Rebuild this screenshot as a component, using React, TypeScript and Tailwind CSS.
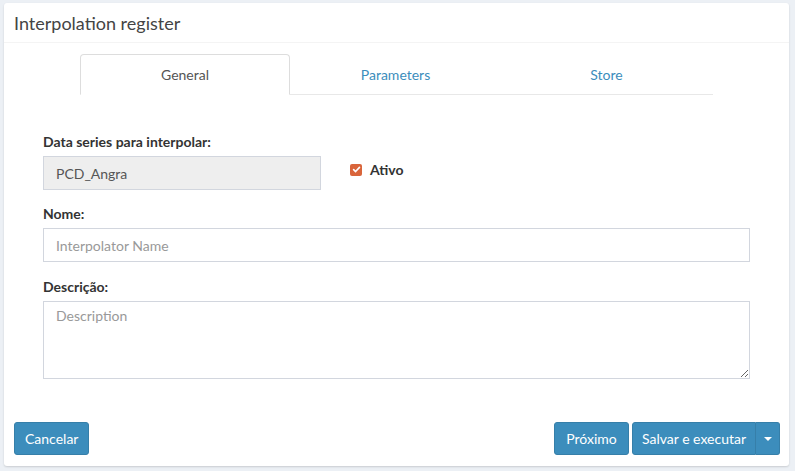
import React from "react";

const font = { fontFamily: "Lato, 'Open Sans', sans-serif" };

export default function App() {
  return (
    <div className="min-h-screen bg-[#ecf0f5] pt-[3px] pl-[4px]" style={font}>
      <div className="w-[785px] h-[463px] bg-white rounded-[3px] shadow-[0_1px_2px_rgba(0,0,0,0.15)] flex flex-col">
        <div className="h-[40px] border-b border-[#f4f4f4] pl-[10px] flex items-center">
          <h3 className="text-[18px] text-[#444] leading-none">Interpolation register</h3>
        </div>

        <div className="mt-[11px] ml-[76px] w-[633px] flex border-b border-[#e8e8e8] text-[14px]">
          <div className="w-[210px] h-[41px] -mb-px flex items-center justify-center border border-[#ddd] border-b-white bg-white rounded-t-[4px] text-[#555]">
            General
          </div>
          <div className="w-[211px] h-[40px] flex items-center justify-center text-[#3c8dbc]">Parameters</div>
          <div className="w-[211px] h-[40px] flex items-center justify-center text-[#3c8dbc]">Store</div>
        </div>

        <div className="px-[39px] pt-[37px] text-[14px] text-[#333]">
          <label className="block font-bold h-[20px] leading-[20px] mb-[4px]">Data series para interpolar:</label>
          <div className="flex items-center">
            <div className="w-[278px] h-[34px] bg-[#eee] border border-[#d2d6de] px-[12px] flex items-center text-[#555]">
              PCD_Angra
            </div>
            <div className="ml-[29px] flex items-center -mt-[7px]">
              <span className="w-[12px] h-[12px] rounded-[2px] bg-[#d9653b] flex items-center justify-center">
                <svg width="9" height="9" viewBox="0 0 10 10" fill="none">
                  <path d="M1.8 5.2 L4 7.3 L8.3 2.6" stroke="white" strokeWidth="1.8" strokeLinecap="round" strokeLinejoin="round" />
                </svg>
              </span>
              <span className="ml-[8px] font-bold">Ativo</span>
            </div>
          </div>

          <label className="block font-bold h-[20px] leading-[20px] mt-[14px] mb-[4px]">Nome:</label>
          <input
            type="text"
            placeholder="Interpolator Name"
            className="w-full h-[34px] border border-[#d2d6de] px-[12px] text-[#555] placeholder:text-[#999] outline-none"
          />

          <label className="block font-bold h-[20px] leading-[20px] mt-[15px] mb-[4px]">Descrição:</label>
          <textarea
            placeholder="Description"
            className="block w-full h-[78px] border border-[#d2d6de] px-[12px] pt-[4px] leading-[20px] text-[#555] placeholder:text-[#999] outline-none"
          />
        </div>

        <div className="mt-auto pl-[10px] pr-[9px] pb-[11px] flex items-center text-[14px]">
          <button className="h-[33px] px-[10px] bg-[#3c8dbc] border border-[#367fa9] rounded-[3px] text-white">
            Cancelar
          </button>
          <div className="ml-auto flex items-center">
            <button className="h-[33px] w-[75px] bg-[#3c8dbc] border border-[#367fa9] rounded-[3px] text-white">
              Próximo
            </button>
            <div className="ml-[3px] flex">
              <button className="h-[33px] w-[124px] bg-[#3c8dbc] border border-[#367fa9] rounded-l-[3px] text-white">
                Salvar e executar
              </button>
              <button className="h-[33px] w-[24px] bg-[#3c8dbc] border border-l-0 border-[#367fa9] rounded-r-[3px] flex items-center justify-center">
                <span className="w-0 h-0 border-l-[4px] border-r-[4px] border-t-[4px] border-l-transparent border-r-transparent border-t-white" />
              </button>
            </div>
          </div>
        </div>
      </div>
    </div>
  );
}
